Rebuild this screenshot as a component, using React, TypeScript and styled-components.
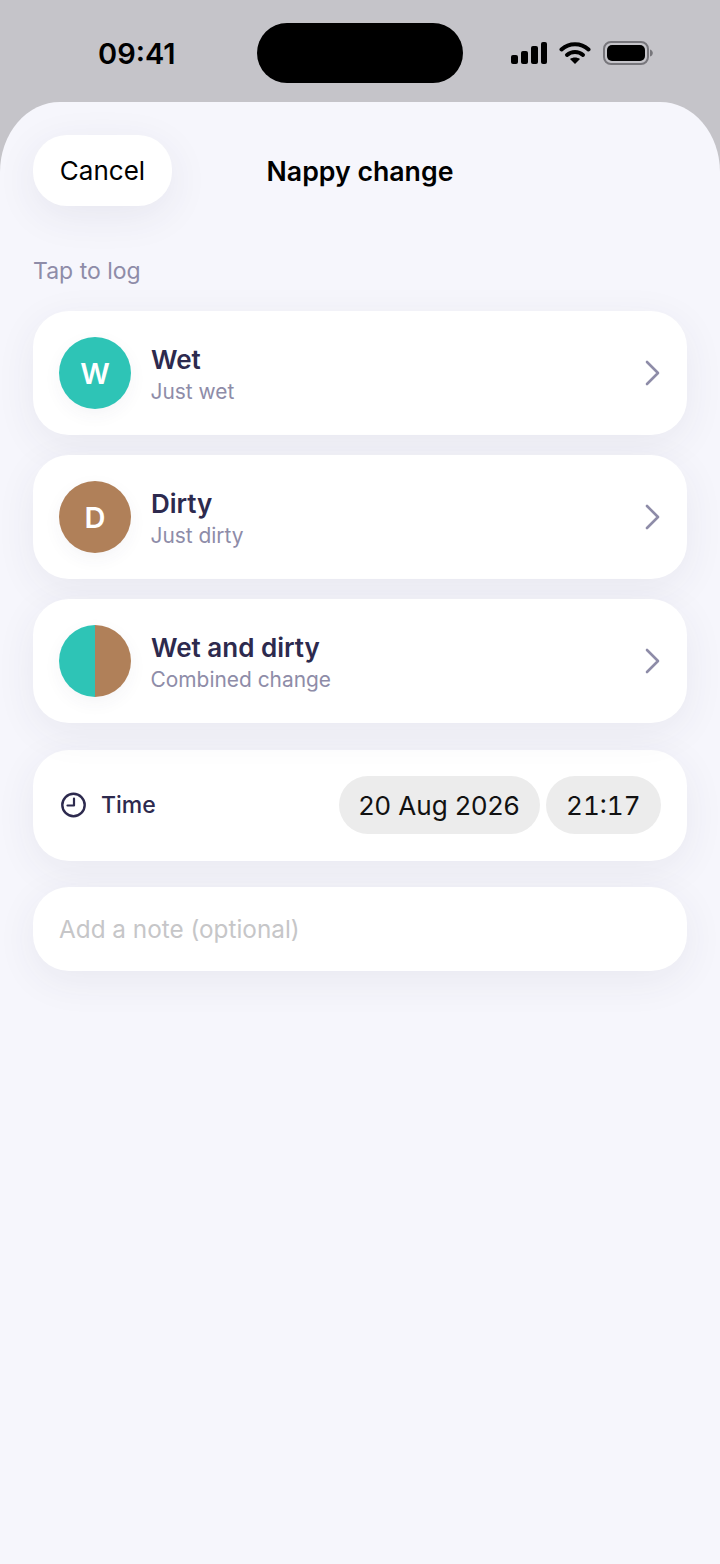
import React from 'react';
import styled, { createGlobalStyle } from 'styled-components';

const GlobalStyle = createGlobalStyle`
  html,
  body {
    margin: 0;
    padding: 0;
    background: #c5c4c9;
    font-family: Inter, "Liberation Sans", sans-serif;
  }
`;

const Screen = styled.div`
  width: 720px;
  height: 1564px;
  display: flex;
  flex-direction: column;
  overflow: hidden;
  background: #c5c4c9;
`;

const StatusBar = styled.div`
  flex: none;
  height: 102px;
  box-sizing: border-box;
  padding-top: 23px;
  display: grid;
  grid-template-columns: 257px 206px 1fr;
`;

const Clock = styled.div`
  height: 60px;
  padding-left: 98px;
  display: flex;
  align-items: center;
  font-size: 29px;
  font-weight: 600;
  color: #000;
`;

const Island = styled.div`
  height: 60px;
  border-radius: 30px;
  background: #000;
`;

const StatusIcons = styled.div`
  height: 60px;
  padding-left: 48px;
  display: flex;
  align-items: center;
  gap: 12px;
`;

const Sheet = styled.div`
  flex: 1;
  box-sizing: border-box;
  padding: 33px 33px 0;
  border-radius: 60px 60px 0 0 / 70px 70px 0 0;
  background: #f6f6fc;
`;

const Header = styled.header`
  position: relative;
  height: 71px;
  display: flex;
  align-items: center;
  justify-content: center;
`;

const CancelButton = styled.button`
  position: absolute;
  left: 0;
  top: 0;
  width: 139px;
  height: 71px;
  padding: 0;
  border: 0;
  border-radius: 34px;
  background: #fff;
  box-shadow: 0 10px 40px rgba(50, 50, 90, 0.08);
  font-family: inherit;
  font-size: 26px;
  color: #000;
`;

const Title = styled.h1`
  margin: 0;
  font-size: 26.7px;
  font-weight: 600;
  color: #000;
`;

const SectionLabel = styled.div`
  margin-top: 51px;
  height: 28px;
  line-height: 28px;
  font-size: 23px;
  color: #8e8ca8;
`;

const List = styled.div`
  margin-top: 26px;
  display: flex;
  flex-direction: column;
  gap: 20px;
`;

const Card = styled.div`
  box-sizing: border-box;
  border-radius: 36px;
  background: #fff;
  box-shadow: 0 10px 40px rgba(50, 50, 90, 0.07);
`;

const LogRow = styled(Card)`
  height: 124px;
  padding: 0 26px;
  display: flex;
  align-items: center;
`;

const Avatar = styled.div<{ $background: string }>`
  flex: none;
  width: 72px;
  height: 72px;
  border-radius: 50%;
  background: ${(p) => p.$background};
  box-shadow: 0 6px 18px rgba(50, 50, 90, 0.05);
  display: flex;
  align-items: center;
  justify-content: center;
  font-size: 29px;
  font-weight: 600;
  color: #fff;
`;

const RowText = styled.div`
  flex: 1;
  margin-left: 20px;
  padding-top: 3px;
`;

const RowTitle = styled.div`
  height: 32px;
  line-height: 32px;
  font-size: 26px;
  font-weight: 600;
  color: #2d2a4e;
`;

const RowSubtitle = styled.div`
  height: 28px;
  margin-top: 2px;
  margin-left: -0.5px;
  line-height: 28px;
  font-size: 20.9px;
  color: #8e8ca8;
`;

const TimeCard = styled(Card)`
  margin-top: 27px;
  height: 111px;
  padding: 26px 26px 0 28px;
  display: flex;
  align-items: flex-start;
`;

const TimeIconSlot = styled.div`
  height: 58px;
  display: flex;
  align-items: center;
`;

const TimeLabel = styled.div`
  flex: 1;
  height: 58px;
  line-height: 59px;
  margin-left: 15px;
  font-size: 23px;
  font-weight: 500;
  color: #2d2a4e;
`;

const Pill = styled.div<{ $tabular?: boolean }>`
  height: 58px;
  padding: 0 ${(p) => (p.$tabular ? '20.5px' : '20px')};
  margin-left: 6px;
  border-radius: 29px;
  background: #ececec;
  display: flex;
  align-items: center;
  font-size: ${(p) => (p.$tabular ? '26px' : '26.1px')};
  font-variant-numeric: ${(p) => (p.$tabular ? 'tabular-nums' : 'normal')};
  color: #111;
`;

const NoteCard = styled(Card)`
  margin-top: 26px;
  height: 84px;
  padding: 0 26px;
  display: flex;
  align-items: center;
  font-size: 24.3px;
  color: #c6c6c8;
`;

const Chevron = () => (
  <svg width="16" height="26" viewBox="0 0 16 26" fill="none">
    <path d="M2 2l11 11L2 24" stroke="#8e8ca8" strokeWidth="2.6" strokeLinecap="round" strokeLinejoin="round" />
  </svg>
);

const ClockIcon = () => (
  <svg width="25" height="26" viewBox="0 0 25 26" fill="none">
    <circle cx="12.5" cy="13" r="11.2" stroke="#2d2a4e" strokeWidth="2.4" />
    <path d="M13 6.500v7H6.500" stroke="#2d2a4e" strokeWidth="2.2" strokeLinecap="round" strokeLinejoin="round" />
  </svg>
);

const SignalIcon = () => (
  <svg width="36" height="24" viewBox="0 0 36 24">
    <rect x="0" y="14" width="7" height="9" rx="2" fill="#000" />
    <rect x="10" y="10" width="7" height="13" rx="2" fill="#000" />
    <rect x="20" y="5" width="7" height="18" rx="2" fill="#000" />
    <rect x="30" y="1" width="6" height="22" rx="2" fill="#000" />
  </svg>
);

const WifiIcon = () => (
  <svg width="32" height="24" viewBox="0 0 32 24" fill="none">
    <path d="M2.500 8.500C10 1.500 22 1.500 29.500 8.500" stroke="#000" strokeWidth="4" strokeLinecap="round" />
    <path d="M8 14c4.500-4 11.500-4 16 0" stroke="#000" strokeWidth="4" strokeLinecap="round" />
    <path d="M16 23l-5-5c2.800-2 7.200-2 10 0z" fill="#000" />
  </svg>
);

const BatteryIcon = () => (
  <svg width="50" height="24" viewBox="0 0 50 24" fill="none">
    <rect x="1" y="1" width="44" height="22" rx="7" stroke="#77767b" strokeWidth="2" />
    <rect x="4" y="4" width="38" height="16" rx="5" fill="#000" />
    <path d="M47 8.500c1.800.5 2.800 2 2.800 3.500s-1 3-2.800 3.500z" fill="#77767b" />
  </svg>
);

const rows = [
  { title: 'Wet', subtitle: 'Just wet', letter: 'W', background: '#2ec4b6' },
  { title: 'Dirty', subtitle: 'Just dirty', letter: 'D', background: '#b08059' },
  {
    title: 'Wet and dirty',
    subtitle: 'Combined change',
    letter: '',
    background: 'linear-gradient(90deg, #2ec4b6 50%, #b08059 50%)',
  },
];

const App: React.FC = () => {
  return (
    <Screen>
      <GlobalStyle />
      <StatusBar>
        <Clock>09:41</Clock>
        <Island />
        <StatusIcons>
          <SignalIcon />
          <WifiIcon />
          <BatteryIcon />
        </StatusIcons>
      </StatusBar>

      <Sheet>
        <Header>
          <CancelButton>Cancel</CancelButton>
          <Title>Nappy change</Title>
        </Header>

        <SectionLabel>Tap to log</SectionLabel>

        <List>
          {rows.map((row) => (
            <LogRow key={row.title}>
              <Avatar $background={row.background}>{row.letter}</Avatar>
              <RowText>
                <RowTitle>{row.title}</RowTitle>
                <RowSubtitle>{row.subtitle}</RowSubtitle>
              </RowText>
              <Chevron />
            </LogRow>
          ))}
        </List>

        <TimeCard>
          <TimeIconSlot>
            <ClockIcon />
          </TimeIconSlot>
          <TimeLabel>Time</TimeLabel>
          <Pill>20 Aug 2026</Pill>
          <Pill $tabular>21:17</Pill>
        </TimeCard>

        <NoteCard>Add a note (optional)</NoteCard>
      </Sheet>
    </Screen>
  );
};

export default App;
